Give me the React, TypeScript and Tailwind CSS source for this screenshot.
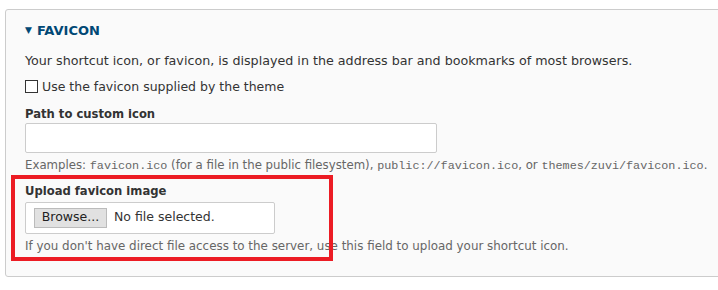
export default function App() {
  return (
    <div className="relative h-[290px] w-[718px] overflow-hidden bg-white pl-[5px] pt-[9px] text-[#333] [font-family:'DejaVu_Sans',sans-serif]">
      <div className="h-[268px] w-[740px] rounded-[3px] border border-[#ccc] bg-[#fafafa] pl-[19px] pt-[11px]">
        {/* LEGEND */}
        <div className="flex items-center gap-[5px] text-[13px] font-bold text-[#004875]">
          <span className="text-[9px]">▼</span>
          <span>FAVICON</span>
        </div>

        <p className="mt-[12px] text-[12.7px] leading-[16px]">
          Your shortcut icon, or favicon, is displayed in the address bar and bookmarks of most browsers.
        </p>

        <label className="mt-[10px] flex items-center gap-[4px] text-[12.5px] leading-[16px]">
          <span className="h-[13px] w-[13px] border border-[#333] bg-white" />
          Use the favicon supplied by the theme
        </label>

        {/* PATH */}
        <div className="mt-[11px] text-[11.6px] font-bold leading-[16px]">Path to custom icon</div>
        <div className="mt-[1px] h-[30px] w-[412px] rounded-[2px] border border-[#ccc] bg-white" />
        <p className="mt-[4px] text-[11.75px] leading-[16px] text-[#666]">
          Examples: <code className="[font-family:'Liberation_Mono',monospace]">favicon.ico</code> (for a file in the public filesystem),{" "}
          <code className="[font-family:'Liberation_Mono',monospace]">public://favicon.ico</code>, or{" "}
          <code className="[font-family:'Liberation_Mono',monospace]">themes/zuvi/favicon.ico</code>.
        </p>

        {/* UPLOAD */}
        <div className="mt-[9px] text-[11.6px] font-bold leading-[16px]">Upload favicon image</div>
        <div className="mt-[3px] flex h-[32px] w-[250px] items-center gap-[7px] rounded-[2px] border border-[#ccc] bg-white pl-[8px]">
          <span className="flex h-[20px] w-[73px] items-center justify-center border border-[#bbb] bg-[#e1e1e1] text-[12.5px] text-[#222]">
            Browse...
          </span>
          <span className="text-[12.5px] text-[#333]">No file selected.</span>
        </div>
        <p className="mt-[4px] text-[11.9px] leading-[16px] text-[#666]">
          If you don't have direct file access to the server, use this field to upload your shortcut icon.
        </p>
      </div>

      {/* highlight box */}
      <div className="absolute left-[11px] top-[175px] h-[86px] w-[322px] border-[4px] border-[#ec1c24]" />
    </div>
  )
}
